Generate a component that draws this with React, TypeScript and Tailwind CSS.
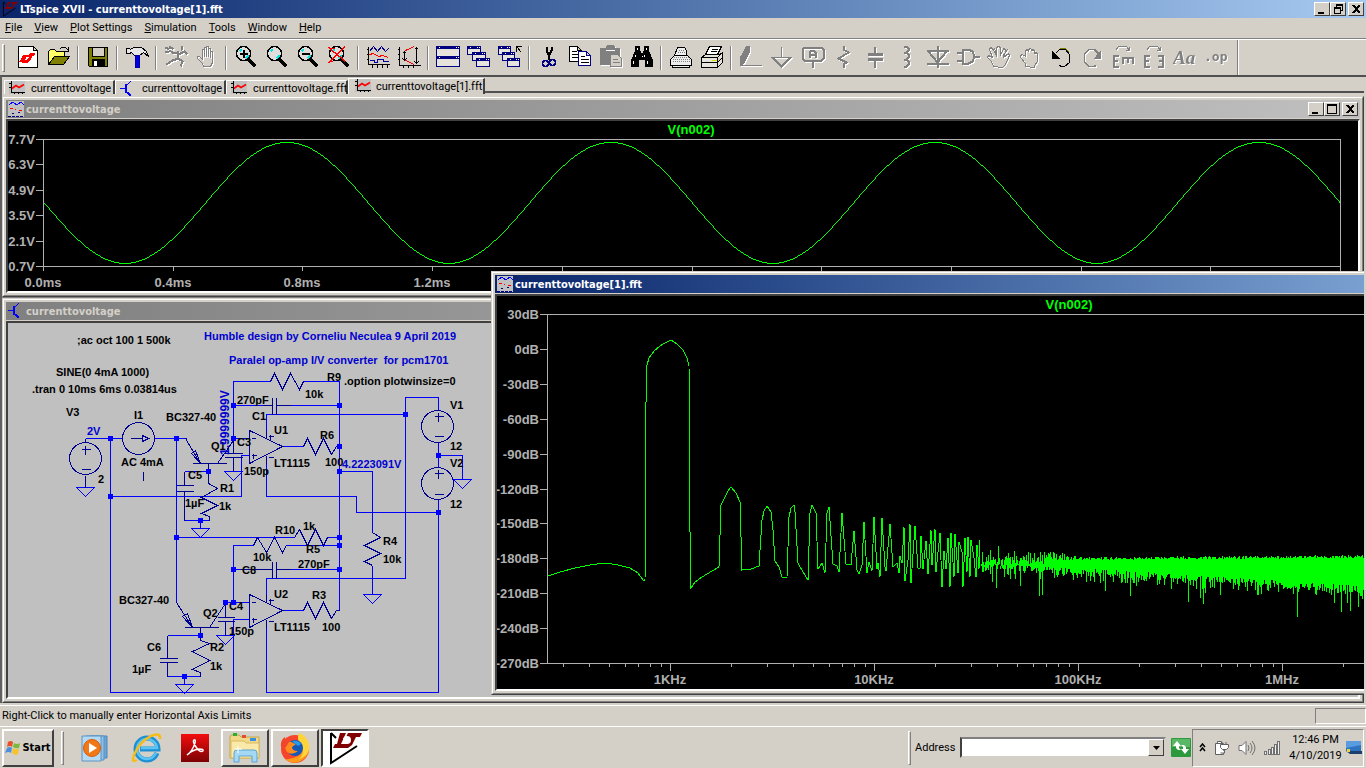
import type { ReactNode } from "react";
import clsx from "clsx";

const TITLE_H = "h-[18px]";

/* ---------- toolbar icons ---------- */

type IconProps = { children: ReactNode; off?: boolean };

const Ico = ({ children, off }: IconProps) => (
  <svg
    width="24"
    height="24"
    viewBox="0 0 24 24"
    fill="none"
    stroke={off ? "#808080" : "#000"}
    shapeRendering="crispEdges"
    className={clsx(off && "drop-shadow-[1px_1px_0_#fff]")}
  >
    <g transform="translate(.5 .5)">{children}</g>
  </svg>
);

const Lens = ({ children }: { children?: ReactNode }) => (
  <Ico>
    <path d="M14 14l7 7" strokeWidth="3" />
    <circle cx="9" cy="8" r="7" fill="#e0dedb" strokeWidth="1.400" />
    <path d="M5 6l2-2M11 13l3-3" stroke="#00e5e5" strokeWidth="2" />
    {children}
  </Ico>
);

const MiniWin = ({ x, y, w, h }: { x: number; y: number; w: number; h: number }) => (
  <>
    <rect x={x} y={y} width={w} height={h} fill="#e6e3dc" stroke="#000080" />
    <path d={`M${x} ${y + 1}h${w}M${x} ${y + 2}h${w}`} stroke="#000080" />
    <path d={`M${x + 2} ${y + 1}h1M${x + w - 4} ${y + 1}h1M${x + w - 2} ${y + 1}h1`} stroke="#fff" />
  </>
);

const LtMark = () => (
  <path d="M3 16l4-7h5l2-2h5l-1 3h-2l-2 5-3 2H5zM10 11l-2 4 3-1 2-3z" fill="#f00" stroke="none" fillRule="evenodd" />
);

const HAND =
  "M8 21l-1-3-5-5v-2h2l3 3V4h2v7V2h2v9V1h2v10V3h2v9V6h2v11l-2 4z";

const tools: { label: string; icon?: ReactNode; off?: boolean }[] = [
  {
    label: "New schematic",
    icon: (
      <Ico>
        <path d="M2 1h15l4 4v17H2zM17 1v4h4" fill="#fff" />
        <LtMark />
      </Ico>
    ),
  },
  {
    label: "Open",
    icon: (
      <Ico>
        <path d="M1 19V6l2-2h4l2 2h8v5H8z" fill="#ffff66" />
        <path d="M1 19l6-8h15l-6 8z" fill="#808000" />
        <path d="M12 4l2-2h4l3 3M21 1v5h-5" />
      </Ico>
    ),
  },
  { label: "" },
  {
    label: "Save",
    icon: (
      <Ico>
        <path d="M2 2h19v19H3l-1-1z" fill="#808000" />
        <path d="M6 2h12v9H6z" fill="#d4d0c8" />
        <path d="M6 14h12v7H6z" fill="#000" />
        <path d="M8 16h2v4H8z" fill="#fff" stroke="#fff" />
      </Ico>
    ),
  },
  { label: "" },
  {
    label: "Control panel",
    icon: (
      <Ico>
        <path d="M1 3h3l1 1 3-2h8l5 4 2 5-5-4-4 3H9L6 7 4 8H1z" fill="#e8e8e8" />
        <path d="M11 10h3v12h-4V10z" fill="#0000e0" stroke="#0000a0" />
      </Ico>
    ),
  },
  { label: "" },
  {
    label: "Run",
    off: true,
    icon: (
      <Ico off>
        <path d="M17 1l1 4M14 6l-1 7M14 7H8L5 5M14 9l6-3 3 3M14 13l-6 2-6 4M14 13l4 3-2 5M1 2l4 2M5 1l4 3M1 6l4 1" strokeWidth="2" />
      </Ico>
    ),
  },
  {
    label: "Halt",
    off: true,
    icon: (
      <Ico off>
        <path d={HAND} />
      </Ico>
    ),
  },
  { label: "" },
  { label: "Zoom area", icon: <Lens><path d="M5 8h8M9 4v8" strokeWidth="2" /></Lens> },
  { label: "Pan", icon: <Lens /> },
  { label: "Zoom back", icon: <Lens><path d="M5 8h8" strokeWidth="2" /></Lens> },
  {
    label: "Zoom full extents",
    icon: <Lens><path d="M1 2l17 14M17 1L1 18M1 16h4M3 3h4" stroke="#f00" strokeWidth="1.400" /></Lens>,
  },
  { label: "" },
  {
    label: "Autorange",
    icon: (
      <Ico>
        <path d="M2 1v18h21M0 4h2M0 9h2M0 14h2M6 19v3M11 19v3M16 19v3M21 19v3" />
        <path d="M3 6l4-5 4 5 4-5 4 5 3-3" stroke="#000080" />
        <path d="M3 9l4-1 5 3 4-1 6 2" stroke="#f00" />
        <path d="M3 15h5v2h3v-3h6v2h5" stroke="#0000a0" />
      </Ico>
    ),
  },
  {
    label: "Plot settings",
    icon: (
      <Ico>
        <path d="M2 1v19h21M0 4h2M0 9h2M0 14h2M6 20v2M11 20v2M16 20v2M7 6v9M5 8l2-2 2 2M5 13l2 2 2-2M19 2v16M17 4l2-2 2 2M17 16l2 2 2-2" />
        <path d="M8 5l9-4M8 15l9 4" stroke="#f00" />
      </Ico>
    ),
  },
  { label: "" },
  {
    label: "Tile",
    icon: (
      <Ico>
        <MiniWin x={0} y={1} w={23} h={10} />
        <MiniWin x={0} y={11} w={23} h={10} />
      </Ico>
    ),
  },
  {
    label: "Cascade",
    icon: (
      <Ico>
        <MiniWin x={0} y={1} w={13} h={8} />
        <MiniWin x={5} y={7} w={13} h={8} />
        <MiniWin x={9} y={13} w={13} h={8} />
      </Ico>
    ),
  },
  {
    label: "Close all",
    icon: (
      <Ico>
        <MiniWin x={0} y={1} w={12} h={8} />
        <MiniWin x={4} y={7} w={12} h={8} />
        <MiniWin x={9} y={13} w={12} h={8} />
        <path d="M18 6V1h5M18 1l5 6" />
      </Ico>
    ),
  },
  { label: "" },
  {
    label: "Cut",
    icon: (
      <Ico>
        <path d="M9 1v4l3 6M14 1v4l-3 6v3" strokeWidth="2" />
        <circle cx="8" cy="18" r="3" stroke="#000080" strokeWidth="1.500" />
        <circle cx="15" cy="17" r="3" stroke="#000080" strokeWidth="1.500" />
      </Ico>
    ),
  },
  {
    label: "Copy",
    icon: (
      <Ico>
        <path d="M1 1h8l4 4v11H1zM9 1v4h4M3 6h5M3 9h7M3 12h7" fill="#fff" />
        <path d="M10 6h8l4 4v10H10zM18 6v4h4" fill="#fff" stroke="#000080" />
        <path d="M12 11h4M12 14h8M12 17h8" />
      </Ico>
    ),
  },
  {
    label: "Paste",
    off: true,
    icon: (
      <Ico off>
        <path d="M1 3h5l2-3h6l2 3h4v16H1z" fill="#808080" />
        <path d="M11 9h7l4 4v8H11z" fill="#d4d0c8" />
        <path d="M6 5h9" stroke="#fff" />
        <path d="M13 14h5M13 17h7" />
      </Ico>
    ),
  },
  {
    label: "Find",
    icon: (
      <Ico>
        <path d="M5 1h4v4l2 4h1l2-4V1h4v4l4 10v6h-7v-7H8v7H1v-6L5 5z" fill="#000" />
        <path d="M7 2v2M16 2v2M5 9v2M14 9v2M3 15v3M17 15v3M11 11h1" stroke="#fff" />
      </Ico>
    ),
  },
  { label: "" },
  {
    label: "Print setup",
    icon: (
      <Ico>
        <path d="M5 10l3-8h7l2 3v5M1 14l4-4h13l4 4v6H1zM3 20v2h17v-2" fill="#eee" />
        <path d="M4 12h15M3 14h17M3 16h17M9 5h5M8 7h7" stroke="#808080" strokeDasharray="1 1" />
      </Ico>
    ),
  },
  {
    label: "Print",
    icon: (
      <Ico>
        <path d="M1 12l4-3h14l3-2v10l-5 5H1zM1 12h16v10M17 12l5-5M1 17h16l5-5" fill="#e6e3dc" />
        <path d="M5 9l4-8h12l-4 8z" fill="#fff" />
        <path d="M11 4h6M10 6h6" />
        <path d="M11 15h5" stroke="#e0e000" />
      </Ico>
    ),
  },
  { label: "" },
  {
    label: "Wire",
    off: true,
    icon: (
      <Ico off>
        <path d="M7 1h3v5L5 17l-4 3V12z" fill="#808080" />
        <path d="M1 20h21" />
      </Ico>
    ),
  },
  {
    label: "Ground",
    off: true,
    icon: <Ico off><path d="M11 1v11M2 12h18l-9 9z" strokeWidth="1.500" /></Ico>,
  },
  {
    label: "Label net",
    off: true,
    icon: (
      <Ico off>
        <path d="M3 2h17l2 2v9l-2 2H3l-2-2V4zM11 15v7M8 12V7l2-2h2l2 2v5M8 9h6" strokeWidth="2" />
      </Ico>
    ),
  },
  {
    label: "Resistor",
    off: true,
    icon: <Ico off><path d="M11 0v4l5 3L6 13l8 4-3 2v3" strokeWidth="2" /></Ico>,
  },
  {
    label: "Capacitor",
    off: true,
    icon: <Ico off><path d="M11 1v7M11 14v8" strokeWidth="2" /><path d="M4 9h15M4 14h15" strokeWidth="3" /></Ico>,
  },
  {
    label: "Inductor",
    off: true,
    icon: <Ico off><path d="M9 1h3l2 2v2l-2 2h-3M9 7h3l2 2v3l-2 2h-3M9 14h3l2 2v3l-2 2H9" strokeWidth="2" /></Ico>,
  },
  {
    label: "Diode",
    off: true,
    icon: <Ico off><path d="M12 0v22M1 5h22M3 6l9 11 9-11M1 18h22" strokeWidth="2" /></Ico>,
  },
  {
    label: "Component",
    off: true,
    icon: <Ico off><path d="M6 4h6l4 2 2 5-2 5-4 2H6zM0 7h6M0 15h6M18 11h5" strokeWidth="2" /></Ico>,
  },
  {
    label: "Move",
    off: true,
    icon: (
      <Ico off>
        <path d="M6 21l-2-5-4-4 1-2 4 2L2 4l1-2 2 1 4 7V2l2-1 2 1v8l3-7 2 1v2l-2 6 5-4 1 2-4 9-3 3z" />
        <path d="M7 3l2 6M15 11l5-7" />
      </Ico>
    ),
  },
  {
    label: "Drag",
    off: true,
    icon: <Ico off><path d="M7 21v-3l-5-6v-2l2-1 3 2V5l2-1 1 2V4l2-1 1 1v1l2-1 1 2v2l2-1 1 2v7l-3 4v2z" /></Ico>,
  },
  {
    label: "Undo",
    icon: (
      <Ico>
        <path d="M10 20l2 1h3l5-4V9l-4-5h-6L6 8" stroke="#000" />
        <path d="M10 3h6l4 4" stroke="#808000" />
        <path d="M3 6v7h7z" fill="#000" />
      </Ico>
    ),
  },
  {
    label: "Redo",
    off: true,
    icon: (
      <Ico off>
        <path d="M16 20l-3 1H9l-5-4V9l4-5h6l5 5" strokeWidth="1.500" />
        <path d="M20 6v7h-6z" fill="#808080" />
      </Ico>
    ),
  },
  {
    label: "Rotate",
    off: true,
    icon: (
      <Ico off>
        <path d="M4 5l3-4h8l3 4M18 1v4h-4" />
        <path d="M7 10H2v11h5M2 15h4M11 18v-6h10v6M16 12v5" strokeWidth="2" />
      </Ico>
    ),
  },
  {
    label: "Mirror",
    off: true,
    icon: (
      <Ico off>
        <path d="M4 5l3-4h8l3 4M18 1v4h-4" />
        <path d="M7 10H2v11h5M2 15h4M15 10h5v11h-5M20 15h-4" strokeWidth="2" />
      </Ico>
    ),
  },
  {
    label: "Text",
    off: true,
    icon: (
      <svg width="24" height="24" className="drop-shadow-[1px_1px_0_#fff]">
        <text x="0" y="19" fontFamily="Liberation Serif, serif" fontStyle="italic" fontWeight="700" fontSize="19" fill="#808080">Aa</text>
      </svg>
    ),
  },
  {
    label: "SPICE directive",
    off: true,
    icon: (
      <svg width="24" height="24" className="drop-shadow-[1px_1px_0_#fff]">
        <text x="0" y="16" fontFamily="DejaVu Sans Mono, monospace" fontWeight="700" fontSize="13" fill="#808080">.op</text>
      </svg>
    ),
  },
];

/* ---------- small window parts ---------- */

const PlotIcon = () => (
  <svg width="16" height="16" viewBox="0 0 16 16" fill="none" shapeRendering="crispEdges">
    <rect width="16" height="16" fill="#c0c0c0" />
    <path d="M1 4l4-3 4 3 4-3 3 3" stroke="#00f" />
    <path d="M2 7.500h3M7 8.500h1M11 9.500h3" stroke="#f00" strokeWidth="1.400" />
    <path d="M4 12.500h2M10 11.500h2M0 15.500h16" stroke="#000080" strokeDasharray="3 1" />
  </svg>
);

const WaveIcon = () => (
  <svg width="16" height="13" viewBox="0 0 16 13" fill="none" className="shrink-0">
    <rect width="16" height="13" fill="#c0c0c0" />
    <path d="M2.500 0v11.500H16M0 2.500h2M0 6.500h2M5.500 12v1M9.500 12v1M13.500 12v1" stroke="#000" shapeRendering="crispEdges" />
    <path d="M3 7.500l4-3 3 2 5-3" stroke="#f00" strokeWidth="1.600" />
  </svg>
);

const BjtIcon = () => (
  <svg width="16" height="16" viewBox="0 0 16 16" fill="none" stroke="#00f" shapeRendering="crispEdges" className="shrink-0">
    <path d="M0 7.500h5M11 0L6 5M6 10l5 5" />
    <path d="M5.500 3v9M8 12l3 3" strokeWidth="2" />
  </svg>
);

const LtLogo = ({ className, ink = "#000" }: { className?: string; ink?: string }) => (
  <svg viewBox="0 0 34 34" className={className} fill="none">
    <path d="M3 2v30l26-17M3 2l5 5" stroke={ink} strokeWidth="2" />
    <path d="M12 2h6l-5 11h6l-2 4H5l2-4h2zM20 2h14l-2 4h-4l-4 8-4 3h-3l5-11h-4z" fill="#800000" />
    <circle cx="19" cy="9" r="4" fill={ink === "#000" ? "#fff" : "#0a246a"} />
  </svg>
);

const CAPTION_ICONS: Record<string, string> = {
  Minimize: "M2 9h6v2H2z",
  Maximize: "M1 1h10v10H1zM2 3v7h8V3z",
  Restore: "M4 1h7v7H9v3H2V4h2zM5 3v1h4v3h1V3zM3 6v4h5V6z",
  Close: "M2 2h2l2 2 2-2h2v1L7 6l3 3v1H8L6 8l-2 2H2V9l3-3-3-3z",
};

const CaptionButton = ({ kind, gap }: { kind: string; gap?: boolean }) => (
  <button
    aria-label={kind}
    className={clsx(
      "flex h-[14px] w-4 items-center justify-center border border-t-white border-l-white border-r-[#404040] border-b-[#404040] bg-[#d4d0c8]",
      gap && "ml-[2px]"
    )}
  >
    <svg width="12" height="12" viewBox="0 0 12 12" shapeRendering="crispEdges">
      <path d={CAPTION_ICONS[kind]} fillRule="evenodd" />
    </svg>
  </button>
);

type ChildWindowProps = {
  title: string;
  icon: ReactNode;
  className: string;
  active?: boolean;
  buttons?: boolean;
  paper?: string;
  children: ReactNode;
};

function ChildWindow({ title, icon, className, active, buttons, paper = "bg-black", children }: ChildWindowProps) {
  return (
    <section className={clsx("absolute border border-t-[#d4d0c8] border-l-[#d4d0c8] border-r-[#404040] border-b-[#404040] bg-[#d4d0c8]", className)}>
      <div className="flex h-full flex-col border border-t-white border-l-white border-r-[#808080] border-b-[#808080] p-[2px]">
        <header
          className={clsx(
            "flex shrink-0 items-center gap-[2px] bg-linear-to-r pr-[2px] pl-[2px]",
            TITLE_H,
            active ? "from-[#0a246a] to-[#7aa0d1] text-white" : "from-[#808080] to-[#c0c0c0] text-[#d4d0c8]"
          )}
        >
          {icon}
          <h2 className="flex-1 pt-[2px] text-[11px] leading-4 font-bold">{title}</h2>
          {buttons && (
            <div className="flex">
              <CaptionButton kind="Minimize" />
              <CaptionButton kind="Maximize" />
              <CaptionButton kind="Close" gap />
            </div>
          )}
        </header>
        <div className={clsx("mt-px min-h-0 flex-1 overflow-hidden border-2 border-t-[#404040] border-l-[#404040] border-r-white border-b-white", paper)}>
          {children}
        </div>
      </div>
    </section>
  );
}

/* ---------- transient plot ---------- */

const sine = Array.from({ length: 1297 }, (_, i) => {
  const y = 202.5 - 60.5 * Math.cos((2 * Math.PI * (i + 44 - 287)) / 324);
  return `${i + 44},${Math.round(y)}`;
}).join(" ");

function TransientPlot() {
  const volts = ["7.7V", "6.3V", "4.9V", "3.5V", "2.1V", "0.7V"];
  const times = ["0.0ms", "0.4ms", "0.8ms", "1.2ms"];
  return (
    <svg width="1350" height="171" viewBox="8 121 1350 171" fontFamily="Liberation Sans, Arial, sans-serif" fontWeight="700" fontSize="13">
      <g stroke="#b0b0b0" fill="none" shapeRendering="crispEdges">
        <path d="M43.500 139.500H1340.500V266.500H43.500z" />
        {volts.map((v, i) => (
          <path key={v} d={`M36 ${Math.round(139 + i * 25.4)}.5h8`} />
        ))}
        {Array.from({ length: 11 }, (_, i) => (
          <path key={i} d={`M${Math.round(43 + i * 129.7)}.5 266v5`} />
        ))}
      </g>
      <g fill="#b0b0b0">
        {volts.map((v, i) => (
          <text key={v} x="35" y={Math.round(144 + i * 25.4)} textAnchor="end">{v}</text>
        ))}
        {times.map((t, i) => (
          <text key={t} x={Math.round(43 + i * 129.7)} y="287" textAnchor="middle">{t}</text>
        ))}
      </g>
      <text x="691" y="134" textAnchor="middle" fill="#0f0">V(n002)</text>
      <polyline points={sine} fill="none" stroke="#0f0" shapeRendering="crispEdges" />
    </svg>
  );
}

/* ---------- FFT plot ---------- */

const harmonics =
  "548,576 560,572 575,568 590,565 605,563 618,565 630,568 638,573 643,580 645,581 646,402 647,365 649,358 654,351 660,346 665,343 671,340 677,344 683,350 687,358 689,366 690,532 691,588 " +
  "695,582 702,577 712,571 719,567 721,505 725,497 728,491 731,487 736,493 740,502 742,570 751,569 759,566 762,520 764,511 767,506 771,512 773,530 775,561 779,567 782,577 787,577 789,517 791,508 794,505 795,512 798,563 803,572 808,580 " +
  "810,513 812,505 816,513 818,569 822,563 825,573 827,513 829,507 833,564 837,566 839,572 842,513 846,564 851,565 854,531 857,570 859,574 862,565 864,522 867,573 869,562 872,571 874,517 877,569 878,563 880,577 882,518 885,567 886,571 890,524 893,567 897,563 899,573 900,556 902,563 904,527 905,581 908,560 910,524 911,583 " +
  "915,526 918,568 920,568 921,536 923,569 926,541 928,574 931,530 932,565 935,529 936,572 940,533 942,587 944,551 946,569 948,538 950,587 951,533 954,577 955,534 958,573 959,542 962,552 963,587 965,538 967,572 968,537 970,577 971,540 974,558 976,577 977,545 979,569 980,540";

const deepNotches: Record<number, number> = {
  992: 582, 996: 588, 1020: 586, 1039: 596, 1042: 595, 1105: 591, 1130: 596, 1188: 602, 1200: 598, 1203: 604,
  1257: 595, 1297: 617, 1334: 603, 1341: 612, 1347: 603, 1350: 611, 1358: 607,
};

// small LCG so the noise floor is the same on every render
function noiseFloor() {
  let seed = 1701;
  const rnd = () => (seed = (seed * 16807) % 2147483647) / 2147483647;
  let d = "";
  for (let x = 981; x < 1366; x++) {
    const early = Math.max(0, (1085 - x) / 104);
    const late = Math.max(0, (x - 1085) / 280);
    const sparse = early > 0.45 && x % 2 === 1;
    const top = 560 - late * 2 + early * 2 - rnd() * (3 + early * (sparse ? 4 : 20)) + (early > 0.4 ? rnd() * 5 : 0);
    const bottom = 568 + late * 18 - early * 5 + rnd() * rnd() * (17 - early * 4) + (rnd() > 0.5 ? 4 : 0);
    d += `M${x}.5 ${Math.round(top)}V${deepNotches[x] ?? Math.round(bottom)}`;
  }
  return d;
}

const NOISE = noiseFloor();

const decadeTicks = [100, 1000, 10000, 100000, 1000000].flatMap((dec) =>
  [1, 2, 3, 4, 5, 6, 7, 8, 9].map((n) => ({
    x: Math.round(670 + 204 * Math.log10((dec * n) / 1000)),
    major: n === 1,
  }))
);

function FftPlot() {
  const levels = [30, 0, -30, -60, -90, -120, -150, -180, -210, -240, -270];
  const freqs = ["1KHz", "10KHz", "100KHz", "1MHz"];
  return (
    <svg width="869" height="393" viewBox="497 296 869 393" fontFamily="Liberation Sans, Arial, sans-serif" fontWeight="700" fontSize="13">
      <g stroke="#b0b0b0" fill="none" shapeRendering="crispEdges">
        <path d="M1366 314.500H547.500V663.500H1366" />
        {levels.map((l, i) => (
          <path key={l} d={`M540 ${Math.round(314 + i * 34.9)}.5h8`} />
        ))}
        {decadeTicks.filter((t) => t.x > 547).map((t) => (
          <path key={t.x} d={`M${t.x}.5 663v${t.major ? 8 : 4}`} />
        ))}
      </g>
      <g fill="#b0b0b0">
        {levels.map((l, i) => (
          <text key={l} x="539" y={Math.round(319 + i * 34.9)} textAnchor="end">{l}dB</text>
        ))}
        {freqs.map((f, i) => (
          <text key={f} x={670 + i * 204} y="684" textAnchor="middle">{f}</text>
        ))}
      </g>
      <text x="1069" y="309" textAnchor="middle" fill="#0f0">V(n002)</text>
      <g stroke="#0f0" fill="none" shapeRendering="crispEdges">
        <polyline points={harmonics} />
        <path d={NOISE} />
      </g>
    </svg>
  );
}

/* ---------- schematic sheet ---------- */

const wires = [
  "M85 438H122M154 438H186M110 438V692H233V619H249M110 496H241V455H249",
  "M176 438V602M176 537H294M327 537H339",
  "M233 438V381H270M303 381H339V610H336M233 405H262M286 405H339M233 438H249",
  "M266 438V414H405M405 578V397H438V410M438 442V467M438 455H462V479M438 499V692H266V619",
  "M266 455V496H356V512H438M282 446H303M339 471H372V532M372 565V594",
  "M184 471H208M184 520H209M200 520V528M233 602V545H253M286 545H339M233 569H262M286 569H339",
  "M266 602V578H405M282 610H303M225 602H249M167 635H200M167 676H200M184 676V684",
];

const grounds = [[85, 487], [200, 528], [233, 471], [462, 479], [372, 594], [184, 684], [225, 635]];

const joints = [
  [110, 438], [176, 438], [208, 471], [200, 520], [110, 496], [176, 537], [233, 405], [233, 438],
  [339, 405], [339, 446], [339, 471], [339, 537], [339, 545], [339, 569], [405, 414], [438, 455],
  [438, 512], [233, 569], [233, 602], [225, 602], [200, 635], [184, 676],
];

const parts = [
  // resistors
  "M270 381L274 373L282 389L290 373L299 389L303 381",
  "M303 446L307 438L315 454L323 438L331 454L336 446H339",
  "M303 610L307 602L315 618L323 602L331 618L336 610H339",
  "M294 537L299 529L307 545L315 529L323 545L327 537",
  "M253 545L257 537L266 552L274 537L282 552L286 545",
  "M372 532L380 537L364 545L380 553L364 561L372 565",
  "M208 471V483L217 488L201 497L217 505L201 513L209 516V520",
  "M200 635V640L209 643L192 651L209 660L192 669L200 672V676",
  // capacitors
  "M262 405H272M272 397V414M276 397V414M276 405H290",
  "M239 569H272M272 561V578M276 561V578M276 569H290",
  "M184 471V485M176 485H193M176 491H193M184 491V520",
  "M167 635V658M159 658H177M159 662H177M167 662V676",
  "M233 438V453M224 453H242M224 457H242M233 457V471",
  "M225 602V617M217 617H234M217 621H234M225 621V635",
  // op-amps
  "M249 430V463L282 446zM251 438H255M251 455H256M253 453V458M268 436H273M270 434V439M268 457H273M266 430V438M266 455V463",
  "M249 594V627L282 610zM251 602H255M251 619H256M253 617V622M268 600H273M270 598V603M268 621H273M266 594V602M266 619V627",
  // transistors
  "M185 438L200 463M192 463H226M217 463L233 440M208 463V471M200 463L191 453L195 450z",
  "M176 602L192 627M184 627H218M209 627L225 603M200 627V635M192 627L182 616L187 613z",
  // sources
  "M85 438V442M85 475V487M81 449H90M85 445V454M81 469H90",
  "M130 438H142M142 435L148 438L142 441z",
  "M434 416H443M438 412V421M434 436H443M434 473H443M438 469V478M434 494H443M143 471V480",
];

const sheetText: [number, number, string][] = [
  [77, 344, ";ac oct 100 1 500k"], [56, 376, "SINE(0 4mA 1000)"], [32, 393, ".tran 0 10ms 6ms 0.03814us"],
  [66, 416, "V3"], [134, 419, "I1"], [166, 421, "BC327-40"], [121, 466, "AC 4mA"], [98, 483, "2"],
  [211, 450, "Q1"], [237, 446, "C3"], [188, 479, "C5"], [220, 492, "R1"], [219, 510, "1k"], [185, 507, "1µF"],
  [244, 475, "150p"], [237, 404, "270pF"], [252, 420, "C1"], [327, 381, "R9"], [305, 398, "10k"],
  [344, 385, ".option plotwinsize=0"], [274, 434, "U1"], [320, 439, "R6"], [274, 467, "LT1115"], [325, 466, "100"],
  [450, 409, "V1"], [450, 450, "12"], [450, 467, "V2"], [450, 508, "12"], [275, 534, "R10"], [303, 530, "1k"],
  [306, 553, "R5"], [253, 561, "10k"], [298, 568, "270pF"], [242, 574, "C8"], [383, 545, "R4"], [383, 563, "10k"],
  [119, 604, "BC327-40"], [203, 617, "Q2"], [229, 610, "C4"], [229, 635, "150p"], [274, 598, "U2"],
  [312, 599, "R3"], [274, 631, "LT1115"], [322, 631, "100"], [147, 651, "C6"], [132, 673, "1µF"],
  [210, 651, "R2"], [210, 670, "1k"],
];

const notes: [number, number, string][] = [
  [204, 340, "Humble design by Corneliu Neculea 9 April 2019"],
  [229, 364, "Paralel op-amp I/V converter\u00a0 for pcm1701"],
  [87, 435, "2V"],
  [342, 468, "4.2223091V"],
];

function Schematic() {
  return (
    <svg width="484" height="376" viewBox="8 323 484 376" fontFamily="Liberation Sans, Arial, sans-serif" fontWeight="700" fontSize="11">
      <g fill="none" stroke="#00f" transform="translate(.5 .5)" shapeRendering="crispEdges">
        <path d={wires.join("")} />
        {grounds.map(([x, y]) => (
          <path key={`${x}-${y}`} d={`M${x - 9} ${y}h18l-9 9z`} />
        ))}
      </g>
      <g fill="none" stroke="#000090" transform="translate(.5 .5)" shapeRendering="crispEdges">
        <path d={parts.join("")} />
        <circle cx="85" cy="458" r="16" />
        <circle cx="138" cy="438" r="16" />
        <circle cx="437" cy="426" r="16" />
        <circle cx="437" cy="483" r="16" />
      </g>
      {sheetText.map(([x, y, t]) => (
        <text key={`${x}-${y}`} x={x} y={y}>{t}</text>
      ))}
      <g fill="#0000d0">
        {notes.map(([x, y, t]) => (
          <text key={t} x={x} y={y}>{t}</text>
        ))}
        <text transform="translate(229 455) rotate(-90)" fontSize="12">1.9999999V</text>
      </g>
      {joints.map(([x, y]) => (
        <rect key={`${x}-${y}`} x={x - 2} y={y - 2} width="5" height="5" fill="#00f" />
      ))}
    </svg>
  );
}

/* ---------- taskbar ---------- */

const RAISED = "border-2 border-t-white border-l-white border-r-[#404040] border-b-[#404040]";

const StartFlag = () => (
  <svg width="16" height="16" viewBox="0 0 16 16">
    <path d="M3 2q3-2 5 0L7 7Q5 5 2 7z" fill="#e8502a" />
    <path d="M9 3q3 2 6 0l-1 5q-3 1-6-1z" fill="#7cb83a" />
    <path d="M2 8q3-2 5 0l-1 5q-2-2-6 0z" fill="#4a8fe0" />
    <path d="M8 8q3 2 6 1l-1 5q-3 2-6-1z" fill="#f6c22d" />
  </svg>
);

const MediaIcon = () => (
  <svg width="30" height="30" viewBox="0 0 30 30">
    <path d="M10 3h17v22H10z" fill="#6aa5d6" stroke="#4d86b8" />
    <path d="M6 3h18v24H6z" fill="#8fc1e6" stroke="#5b94c4" />
    <path d="M2 3h19v25H2z" fill="#b5d9f2" stroke="#5b94c4" />
    <circle cx="12" cy="15" r="8.500" fill="#f07818" stroke="#d85c08" />
    <path d="M9 10l8 5-8 5z" fill="#fff" />
  </svg>
);

const IeIcon = () => (
  <svg width="32" height="32" viewBox="0 0 32 32" fill="none">
    <path d="M26 21q-3 7-10 7A11 11 0 1 1 27 17H9" stroke="#1f8fd4" strokeWidth="5" />
    <path d="M25 21q-3 6-9 6A10 10 0 1 1 26 16H10" stroke="#5cc4f2" strokeWidth="2.500" />
    <path d="M6 28Q0 31 3 23 8 10 20 4q10-4 9 3" stroke="#f7bd16" strokeWidth="2.500" />
  </svg>
);

const AcrobatIcon = () => (
  <svg width="28" height="28" viewBox="0 0 28 28" fill="none">
    <defs>
      <linearGradient id="acro" x1="0" y1="0" x2="0" y2="1">
        <stop offset="0" stopColor="#f40d0d" />
        <stop offset="1" stopColor="#7c0204" />
      </linearGradient>
    </defs>
    <rect width="28" height="28" fill="url(#acro)" />
    <path d="M6 21q5-3 8-12 1-4-1-3-2 1 2 7 4 6 7 4 1-2-4-2-7 1-12 6z" stroke="#fff" strokeWidth="1.400" />
  </svg>
);

const ExplorerIcon = () => (
  <svg width="34" height="32" viewBox="0 0 34 32">
    <path d="M2 26V5l1-2h8l2 2h18v21z" fill="#f1d98a" stroke="#c5a548" />
    <path d="M5 1h4v3H5z" fill="#2fae2f" />
    <path d="M14 3h4v3h-4z" fill="#e05030" />
    <path d="M22 6h6v3h-6z" fill="#3a8fe0" />
    <path d="M3 9h13l2 2h13v15H3z" fill="#fae9a8" stroke="#d8bb60" />
    <path d="M6 30V21q0-3 3-3h17q3 0 3 3v9h-5v-6H11v6z" fill="#a5d8f3" stroke="#58a5d6" />
    <path d="M10 14v7M7 17h7" stroke="#fff" />
  </svg>
);

const FirefoxIcon = () => (
  <svg width="32" height="32" viewBox="0 0 32 32">
    <circle cx="16" cy="17" r="14" fill="#f6452c" />
    <path d="M6 27q10 8 20-1 7-8 2-16L20 2q-2 5 1 9 5 8-2 13-7 4-13 3z" fill="#ff9a1a" />
    <path d="M20 1q-3 6 2 11 5 9-2 15 12-4 10-15Q27 3 20 1z" fill="#ffd43a" />
    <circle cx="16" cy="16" r="8" fill="#1459b8" />
    <path d="M7 12q4-4 7-1l3 1-4 3q0 4 6 4-6 5-11 1-3-4-1-8z" fill="#ff8a1e" />
    <path d="M13 9q6-1 9 3l-3 2z" fill="#2a9be8" />
    <path d="M2 15Q1 8 6 5l1 4 3 1-3 5z" fill="#f2462c" />
  </svg>
);

const tabs = [
  { name: "currenttovoltage", icon: <WaveIcon />, width: "w-[111px]" },
  { name: "currenttovoltage", icon: <BjtIcon />, width: "w-[111px]" },
  { name: "currenttovoltage.fft", icon: <WaveIcon />, width: "w-[122px]" },
];

const menus = ["File", "View", "Plot Settings", "Simulation", "Tools", "Window", "Help"];

export default function App() {
  return (
    <div className="flex min-h-screen flex-col overflow-hidden bg-[#d4d0c8] font-['Roboto','Liberation_Sans',sans-serif] text-[11px] leading-4 text-black">
      <header className={clsx("flex items-center bg-linear-to-r from-[#0a246a] to-[#a6caf0] pr-[2px] pl-[2px] font-['DejaVu_Sans_Condensed','Noto_Sans',sans-serif]", TITLE_H)}>
        <LtLogo className="size-4" ink="#000010" />
        <h1 className="ml-[2px] flex-1 pt-px font-bold text-white">LTspice XVII - currenttovoltage[1].fft</h1>
        <CaptionButton kind="Minimize" />
        <CaptionButton kind="Restore" />
        <CaptionButton kind="Close" gap />
      </header>

      <nav className="flex h-[21px] items-center gap-3 border-b border-[#808080] pl-[5px]">
        {menus.map((m) => (
          <button key={m}>
            <span className="underline">{m[0]}</span>
            {m.slice(1)}
          </button>
        ))}
      </nav>

      <div className="flex h-9 border-t border-white">
        <div className="flex items-center border-r border-[#808080] pl-[2px] shadow-[1px_0_0_#fff]">
          <span className="mr-[7px] h-7 w-[3px] border border-t-white border-l-white border-r-[#808080] border-b-[#808080]" />
          {tools.map((t, i) =>
            t.icon ? (
              <button key={i} aria-label={t.label} disabled={t.off} className="flex h-7 w-[31px] items-center justify-center pb-px">
                {t.icon}
              </button>
            ) : (
              <span key={i} className="flex w-2 justify-center">
                <span className="h-6 w-[2px] border-l border-[#808080] bg-white" />
              </span>
            )
          )}
          <span className="w-[6px]" />
        </div>
      </div>

      <div className="flex flex-1 flex-col border-t-2 border-l-2 border-t-[#505050] border-l-[#606060] pr-[2px]">
        <div className="flex h-[19px] pl-[2px]">
          {tabs.map((t, i) => (
            <button
              key={i}
              className={clsx("mt-[3px] flex h-[14px] items-start gap-[6px] border-t border-r-2 border-l border-t-white border-l-white border-r-[#404040] pl-1 leading-[15px]", t.width)}
            >
              {t.icon}
              <span>{t.name}</span>
            </button>
          ))}
          <button className="mt-px flex h-4 w-[137px] items-start gap-[5px] border-t border-r-2 border-l border-t-white border-l-white border-r-[#404040] pl-[6px] leading-4">
            <WaveIcon />
            <span>currenttovoltage[1].fft</span>
          </button>
          <div className="mb-[3px] flex-1 border-b-2 border-[#505050]" />
        </div>

        <main className="relative flex-1 overflow-hidden bg-[#808080] font-['DejaVu_Sans_Condensed','Noto_Sans',sans-serif]">
          <ChildWindow title="currenttovoltage" icon={<PlotIcon />} buttons className="top-0 right-0 left-0 h-[201px]">
            <TransientPlot />
          </ChildWindow>
          <ChildWindow title="currenttovoltage" icon={<BjtIcon />} paper="bg-[#c0c0c0]" className="top-[202px] right-0 bottom-0 left-0">
            <Schematic />
          </ChildWindow>
          <ChildWindow title="currenttovoltage[1].fft" icon={<PlotIcon />} active className="top-[175px] right-[-8px] bottom-[8px] left-[489px]">
            <FftPlot />
          </ChildWindow>
        </main>
      </div>

      <div className="mt-[2px] flex h-[21px] items-center border-t border-white pl-[2px]">
        <span className="flex-1">Right-Click to manually enter Horizontal Axis Limits</span>
        <span className="h-4 w-[51px] border border-t-[#808080] border-l-[#808080] border-r-white border-b-white" />
      </div>

      <footer className="flex h-[42px] items-center border-t border-white pr-[2px] pl-[2px]">
        <button className={clsx("flex h-[38px] w-[52px] items-center justify-center gap-px font-['DejaVu_Sans_Condensed','Noto_Sans',sans-serif] font-bold", RAISED)}>
          <StartFlag />
          Start
        </button>
        <span className="mr-[13px] ml-[7px] h-[34px] w-[3px] border border-t-white border-l-white border-r-[#808080] border-b-[#808080]" />
        <button aria-label="Media Player" className="flex w-9 justify-center"><MediaIcon /></button>
        <button aria-label="Internet Explorer" className="ml-4 flex w-9 justify-center"><IeIcon /></button>
        <button aria-label="Adobe Reader" className="ml-3 flex w-9 justify-center"><AcrobatIcon /></button>
        <button aria-label="Explorer" className={clsx("ml-2 flex h-[38px] w-12 items-center justify-center", RAISED)}><ExplorerIcon /></button>
        <button aria-label="Firefox" className={clsx("ml-[2px] flex h-[38px] w-12 items-center justify-center", RAISED)}><FirefoxIcon /></button>
        <button aria-label="LTspice" className="ml-[2px] flex h-[38px] w-12 items-center justify-center border-2 border-t-[#404040] border-l-[#404040] border-r-white border-b-white bg-white">
          <LtLogo className="size-[34px]" />
        </button>

        <div className="ml-auto flex h-full items-center">
          <span className="h-[34px] w-[3px] border border-t-white border-l-white border-r-[#808080] border-b-[#808080]" />
          <label htmlFor="address" className="ml-1 w-[45px]">Address</label>
          <div className="flex h-[21px] w-[206px] border-2 border-t-[#808080] border-l-[#404040] border-r-[#d4d0c8] border-b-[#d4d0c8] bg-white">
            <input id="address" className="min-w-0 flex-1 bg-white outline-none" />
            <button aria-label="Address history" className="flex w-4 items-center justify-center border border-t-white border-l-white border-r-[#404040] border-b-[#404040] bg-[#d4d0c8]">
              <svg width="7" height="4" viewBox="0 0 7 4"><path d="M0 0h7L3.500 4z" /></svg>
            </button>
          </div>
          <button aria-label="Go" className="mr-px ml-[5px]">
            <svg width="20" height="19" viewBox="0 0 20 19">
              <rect width="20" height="19" rx="1" fill="#2c9a3c" />
              <rect x="1" y="1" width="18" height="8" fill="#58b865" />
              <path d="M2 8l4-5 4 5H8v2l2 2H7L5 10V8zM10 11h2V9l-2-2h3l2 2v2h3l-4 5z" fill="#fff" />
            </svg>
          </button>
          <div className="flex h-[38px] w-[172px] items-center border border-t-[#808080] border-l-[#808080] border-r-white border-b-white pl-[6px]">
            <svg width="7" height="9" viewBox="0 0 7 9" fill="none" stroke="#000" strokeWidth="1.500"><path d="M1 4l2.500-3L6 4M1 8l2.500-3L6 8" /></svg>
            <svg width="16" height="16" viewBox="0 0 16 16" className="ml-2" fill="#fff" stroke="#606060">
              <path d="M1.500 3.500h8v11h-8zM3.500 1.500h4v2h-4z" />
              <path d="M8 4.500V2M12 4.500V2M6.500 4.500h8v3l-2 2h-4l-2-2zM10.500 10v3h-4" />
            </svg>
            <svg width="18" height="16" viewBox="0 0 18 16" className="ml-2" fill="none" stroke="#707070">
              <path d="M1 5.500h3l4-4v13l-4-4H1z" fill="#fff" />
              <path d="M10 5q2 3 0 6M12 3q4 5 0 10M14 1q6 7 0 14" />
            </svg>
            <svg width="17" height="14" viewBox="0 0 17 14" className="ml-2" fill="#eee" stroke="#707070" shapeRendering="crispEdges">
              <path d="M.5 10.500h2v3h-2zM4.500 8.500h2v5h-2zM7.500 6.500h2v7h-2zM10.500 3.500h2v10h-2zM13.500 .5h2v13h-2z" />
            </svg>
            <div className="ml-2 flex-1 text-center leading-4">
              <div>12:46 PM</div>
              <div>4/10/2019</div>
            </div>
            <svg width="16" height="14" viewBox="0 0 16 14" className="mr-px ml-1">
              <path d="M0 0h15v10H0z" fill="#2f74c0" />
              <path d="M0 0h15v4L0 7z" fill="#5b9be0" />
              <path d="M0 10h16v3H4z" fill="#1d3f6e" />
              <path d="M1 8h3v3H1z" fill="#f2d23a" />
            </svg>
          </div>
        </div>
      </footer>
    </div>
  );
}
